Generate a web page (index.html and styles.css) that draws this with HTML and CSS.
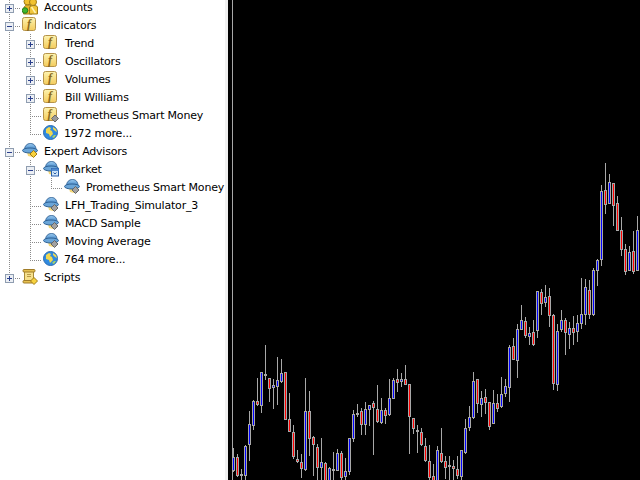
FILE: index.html
```html
<!DOCTYPE html>
<html lang="en">
<head>
    <meta charset="UTF-8">
    <title>Navigator</title>
    <link rel="stylesheet" href="styles.css">
</head>
<body>
    <svg class="sprites" xmlns="http://www.w3.org/2000/svg">
        <defs>
            <linearGradient id="gold" x1="0" y1="0" x2="0" y2="1">
                <stop offset="0" stop-color="#fdf3b0"/>
                <stop offset="1" stop-color="#f3cb5c"/>
            </linearGradient>
            <linearGradient id="sky" x1="0" y1="0" x2="0" y2="1">
                <stop offset="0" stop-color="#9ccbf0"/>
                <stop offset="1" stop-color="#3a80c4"/>
            </linearGradient>
            <symbol id="i-func" viewBox="0 0 16 16">
                <rect x="0.5" y="0.5" width="13" height="13" rx="2" fill="url(#gold)" stroke="#b5934a"/>
                <text x="7" y="11" text-anchor="middle" class="fn">f</text>
            </symbol>
            <symbol id="i-func-gem" viewBox="0 0 16 16">
                <rect x="0.5" y="0.5" width="13" height="13" rx="2" fill="url(#gold)" stroke="#b5934a"/>
                <text x="6.500" y="11" text-anchor="middle" class="fn">f</text>
                <path d="M12 8l3.500 3.500-3.500 3.500-3.500-3.500z" fill="#9a9a9a" stroke="#6a6a6a"/>
            </symbol>
            <symbol id="i-hat" viewBox="0 0 16 16">
                <path d="M5 9l1 4 4 1 3-5z" fill="#f5d878"/>
                <path d="M2.500 7C2.500 3 5 .5 8.500 .5S14 3 14 7z" fill="url(#sky)" stroke="#3a6a9c"/>
                <ellipse cx="8" cy="7.500" rx="7.500" ry="2.500" fill="#6aa5d8" stroke="#2f6296"/>
            </symbol>
            <symbol id="i-ea" viewBox="0 0 16 16">
                <use href="#i-hat"/>
                <path d="M11.500 7.500l3.500 3.500-3.500 3.500-3.500-3.500z" fill="#f7d23e" stroke="#a07c18"/>
            </symbol>
            <symbol id="i-ea-gem" viewBox="0 0 16 16">
                <use href="#i-hat"/>
                <path d="M11.500 7.500l3.500 3.500-3.500 3.500-3.500-3.500z" fill="#a2a2a2" stroke="#666"/>
            </symbol>
            <symbol id="i-market" viewBox="0 0 16 16">
                <use href="#i-hat"/>
                <rect x="8.500" y="7.500" width="7" height="7.500" fill="#cfe4f7" stroke="#2a5fa8"/>
                <rect x="8.500" y="7.500" width="7" height="2.500" fill="#4f8ad0"/>
                <path d="M10.500 11.500l1.500 1.500 1.500-1.500" fill="none" stroke="#2a5fa8"/>
            </symbol>
            <symbol id="i-globe" viewBox="0 0 16 16">
                <circle cx="7.500" cy="7.500" r="7" fill="#2f8ae0" stroke="#2a6cb2"/>
                <path d="M3 4l3-2 2 1-1 2 2 1 1 3-3 3-1-3-3-1zM10 2l3 2 1 3-2-1-2-2z" fill="#f0d850"/>
                <path d="M9 12l2-2 2 0-2 3z" fill="#a8d468"/>
            </symbol>
            <symbol id="i-scroll" viewBox="0 0 16 16">
                <rect x="2.500" y="2" width="9" height="11" fill="#f6e08c" stroke="#a88a38"/>
                <rect x="1" y="0.500" width="12" height="2.500" rx="1" fill="#e6c050" stroke="#a07c28"/>
                <rect x="1" y="11.500" width="10" height="2.500" rx="1" fill="#e6c050" stroke="#a07c28"/>
                <path d="M5 5.500h4M5 7.500h4" stroke="#b89a48"/>
                <path d="M12 8.500l3.500 3.500-3.500 3.500-3.500-3.500z" fill="#f7d23e" stroke="#a07c18"/>
            </symbol>
            <symbol id="i-accounts" viewBox="0 0 16 16">
                <circle cx="5.500" cy="2.500" r="3.500" fill="#f2c230" stroke="#a07c18"/>
                <circle cx="11" cy="3" r="3.500" fill="#f2c230" stroke="#a07c18"/>
                <path d="M1.500 12c0-5 2-6 4.500-6s4 1 4 3v6H1.500z" fill="#e8b428" stroke="#a07c18"/>
                <path d="M7.500 15V8c1-2 7.500-2 8 0v7z" fill="#f0c63a" stroke="#a07c18"/>
                <path d="M9.500 8l4 6" stroke="#fff2b0" stroke-width="1.500"/>
                <circle cx="3" cy="11.500" r="2.800" fill="#3fb82e" stroke="#2a7d20"/>
            </symbol>
        </defs>
    </svg>

    <nav class="tree">
        <div class="row"><span class="cell tee"><i class="box plus"></i></span><svg class="icon"><use href="#i-accounts"/></svg><span class="label">Accounts</span></div>
        <div class="row"><span class="cell tee"><i class="box minus"></i></span><svg class="icon"><use href="#i-func"/></svg><span class="label">Indicators</span></div>
        <div class="row"><span class="cell pipe"></span><span class="cell tee"><i class="box plus"></i></span><svg class="icon"><use href="#i-func"/></svg><span class="label">Trend</span></div>
        <div class="row"><span class="cell pipe"></span><span class="cell tee"><i class="box plus"></i></span><svg class="icon"><use href="#i-func"/></svg><span class="label">Oscillators</span></div>
        <div class="row"><span class="cell pipe"></span><span class="cell tee"><i class="box plus"></i></span><svg class="icon"><use href="#i-func"/></svg><span class="label">Volumes</span></div>
        <div class="row"><span class="cell pipe"></span><span class="cell tee"><i class="box plus"></i></span><svg class="icon"><use href="#i-func"/></svg><span class="label">Bill Williams</span></div>
        <div class="row"><span class="cell pipe"></span><span class="cell tee"></span><svg class="icon"><use href="#i-func-gem"/></svg><span class="label">Prometheus Smart Money</span></div>
        <div class="row"><span class="cell pipe"></span><span class="cell elbow"></span><svg class="icon"><use href="#i-globe"/></svg><span class="label more">1972 more...</span></div>
        <div class="row"><span class="cell tee"><i class="box minus"></i></span><svg class="icon"><use href="#i-ea"/></svg><span class="label">Expert Advisors</span></div>
        <div class="row"><span class="cell pipe"></span><span class="cell tee"><i class="box minus"></i></span><svg class="icon"><use href="#i-market"/></svg><span class="label">Market</span></div>
        <div class="row"><span class="cell pipe"></span><span class="cell pipe"></span><span class="cell elbow"></span><svg class="icon"><use href="#i-ea-gem"/></svg><span class="label">Prometheus Smart Money</span></div>
        <div class="row"><span class="cell pipe"></span><span class="cell tee"></span><svg class="icon"><use href="#i-ea-gem"/></svg><span class="label">LFH_Trading_Simulator_3</span></div>
        <div class="row"><span class="cell pipe"></span><span class="cell tee"></span><svg class="icon"><use href="#i-ea-gem"/></svg><span class="label">MACD Sample</span></div>
        <div class="row"><span class="cell pipe"></span><span class="cell tee"></span><svg class="icon"><use href="#i-ea-gem"/></svg><span class="label">Moving Average</span></div>
        <div class="row"><span class="cell pipe"></span><span class="cell elbow"></span><svg class="icon"><use href="#i-globe"/></svg><span class="label more">764 more...</span></div>
        <div class="row"><span class="cell elbow"><i class="box plus"></i></span><svg class="icon"><use href="#i-scroll"/></svg><span class="label">Scripts</span></div>
    </nav>

    <div class="splitter"></div>

    <main class="chart">
        <svg id="candles" class="candles" viewBox="231 0 409 480" xmlns="http://www.w3.org/2000/svg"></svg>
    </main>

    <script src="chart.js"></script>
</body>
</html>
```

FILE: styles.css
```css
html, body {
    margin: 0;
    height: 100%;
}
body {
    display: flex;
    overflow: hidden;
    background: #fff;
    font-family: "DejaVu Sans", sans-serif;
    font-size: 11px;
    color: #000;
}
.sprites {
    width: 0;
    height: 0;
    flex: none;
}
.fn {
    font-family: "Liberation Serif", serif;
    font-style: italic;
    font-size: 12px;
    font-weight: bold;
    fill: #8a6a20;
}

/* navigator tree */
.tree {
    width: 225px;
    flex: none;
    margin-top: -2px;
}
.row {
    display: flex;
    height: 18px;
    white-space: nowrap;
}
.cell {
    display: block;
    flex: none;
    width: 21px;
    height: 18px;
    background-repeat: no-repeat;
}
.pipe {
    background-image: linear-gradient(#8a8a8a 50%, transparent 50%);
    background-size: 1px 2px;
    background-position: 9px 0;
    background-repeat: repeat-y;
}
.tee {
    background-image:
        repeating-linear-gradient(#8a8a8a 0 1px, transparent 1px 2px),
        repeating-linear-gradient(90deg, #8a8a8a 0 1px, transparent 1px 2px);
    background-size: 1px 18px, 12px 1px;
    background-position: 9px 0, 9px 10px;
}
.elbow {
    background-image:
        repeating-linear-gradient(#8a8a8a 0 1px, transparent 1px 2px),
        repeating-linear-gradient(90deg, #8a8a8a 0 1px, transparent 1px 2px);
    background-size: 1px 10px, 12px 1px;
    background-position: 9px 0, 9px 10px;
}
.box {
    display: block;
    width: 7px;
    height: 7px;
    margin: 6px 0 0 5px;
    border: 1px solid #8f9db0;
    background-color: #eceff4;
    background-repeat: no-repeat;
}
.plus {
    background-image: linear-gradient(#2a3f8c, #2a3f8c), linear-gradient(#2a3f8c, #2a3f8c);
    background-size: 5px 1px, 1px 5px;
    background-position: 1px 3px, 3px 1px;
}
.minus {
    background-image: linear-gradient(#2a3f8c, #2a3f8c);
    background-size: 5px 1px;
    background-position: 1px 3px;
}
.icon {
    flex: none;
    width: 16px;
    height: 16px;
    margin: 1px 6px 0 1px;
}
.label {
    padding-top: 1px;
    line-height: 18px;
    letter-spacing: -0.2px;
}
.more {
    margin-left: -1px;
}

/* chart pane */
.splitter {
    width: 6px;
    flex: none;
    background: linear-gradient(90deg, #f0f0f0 0 3px, #000 3px);
}
.chart {
    flex: 1;
    background: #000;
}
.candles {
    display: block;
    width: 100%;
    height: 100%;
    shape-rendering: crispEdges;
}
```

FILE: chart.js
```js
// high, body top, body bottom, low, type (b = up, r = down, d = doji)
const bars = [
    [448,457,471,472,'b'],[454,457,476,477,'r'],[469,474,476,481,'d'],[445,446,476,481,'b'],
    [411,424,445,461,'b'],[400,401,426,430,'b'],[378,401,405,406,'r'],[372,372,406,413,'b'],
    [345,374,376,380,'d'],[378,378,389,402,'r'],[379,385,388,409,'b'],[357,380,387,405,'b'],
    [359,373,382,383,'b'],[372,372,420,420,'r'],[393,419,432,432,'r'],[425,432,457,459,'r'],
    [450,459,462,463,'r'],[454,462,469,478,'r'],[378,411,470,471,'b'],[391,411,439,456,'r'],
    [436,437,445,476,'r'],[444,447,468,481,'r'],[438,462,468,481,'b'],[462,463,482,482,'r'],
    [467,468,482,482,'b'],[452,469,471,481,'d'],[449,453,471,471,'b'],[451,453,478,481,'r'],
    [458,471,477,481,'b'],[438,438,472,475,'b'],[410,414,439,442,'b'],[404,413,415,417,'d'],
    [408,411,425,435,'r'],[402,409,425,435,'b'],[405,405,410,426,'b'],[401,403,408,455,'r'],
    [385,409,422,423,'r'],[398,410,423,424,'b'],[408,410,416,424,'r'],[379,398,415,416,'b'],
    [378,380,399,399,'b'],[369,379,383,392,'r'],[373,379,382,387,'b'],[365,379,385,385,'r'],
    [384,384,417,454,'r'],[418,418,429,434,'r'],[425,430,432,453,'d'],[428,432,445,446,'r'],
    [438,446,461,462,'r'],[445,461,478,481,'r'],[464,476,482,482,'r'],[446,450,482,482,'b'],
    [428,453,462,463,'r'],[456,461,468,479,'r'],[456,465,467,481,'d'],[460,466,469,481,'r'],
    [456,469,476,479,'r'],[450,450,477,481,'b'],[419,428,453,454,'b'],[406,417,428,431,'b'],
    [372,381,418,419,'b'],[379,379,404,413,'r'],[391,398,405,417,'b'],[389,397,403,414,'r'],
    [402,402,427,430,'r'],[390,403,424,424,'b'],[394,403,409,412,'r'],[377,394,407,408,'b'],
    [379,386,394,397,'b'],[345,347,388,402,'b'],[338,346,360,360,'r'],[324,329,361,378,'b'],
    [305,320,330,330,'b'],[317,321,336,338,'r'],[327,333,337,345,'b'],[320,332,345,346,'r'],
    [291,291,331,338,'b'],[289,292,304,315,'r'],[285,297,303,307,'b'],[288,296,316,327,'r'],
    [314,315,384,390,'r'],[324,331,385,391,'b'],[310,320,330,332,'b'],[318,320,333,355,'r'],
    [322,328,335,349,'b'],[316,328,333,345,'r'],[315,323,332,342,'b'],[278,314,324,329,'b'],
    [279,287,315,325,'b'],[280,290,315,319,'r'],[268,270,315,316,'b'],[259,260,271,286,'b'],
    [185,191,260,266,'b'],[163,190,205,214,'r'],[174,182,204,204,'b'],[183,183,206,226,'r'],
    [196,203,231,231,'r'],[217,230,250,256,'r'],[244,249,272,275,'r'],[246,252,271,271,'b'],
    [231,251,272,274,'r'],[216,230,271,271,'b']
];
const fills = { b: '#0000ff', r: '#ff0000', d: '#a8a8a8' };
const edge = '#a8a8a8';
const svg = document.getElementById('candles');

function addRect(x, y, w, h, fill) {
    if (h <= 0) return;
    const r = document.createElementNS('http://www.w3.org/2000/svg', 'rect');
    r.setAttribute('x', x);
    r.setAttribute('y', y);
    r.setAttribute('width', w);
    r.setAttribute('height', h);
    r.setAttribute('fill', fill);
    svg.appendChild(r);
}

// the gray line along the left of the chart
addRect(232, 0, 1, 480, edge);

bars.forEach(function (bar, i) {
    const x = 233 + 4 * i;
    const [high, top, bottom, low, type] = bar;
    addRect(x, high, 1, low - high, edge);
    addRect(x - 1, top, 3, bottom - top, edge);
    addRect(x, top + 1, 1, bottom - top - 2, fills[type]);
});
```
